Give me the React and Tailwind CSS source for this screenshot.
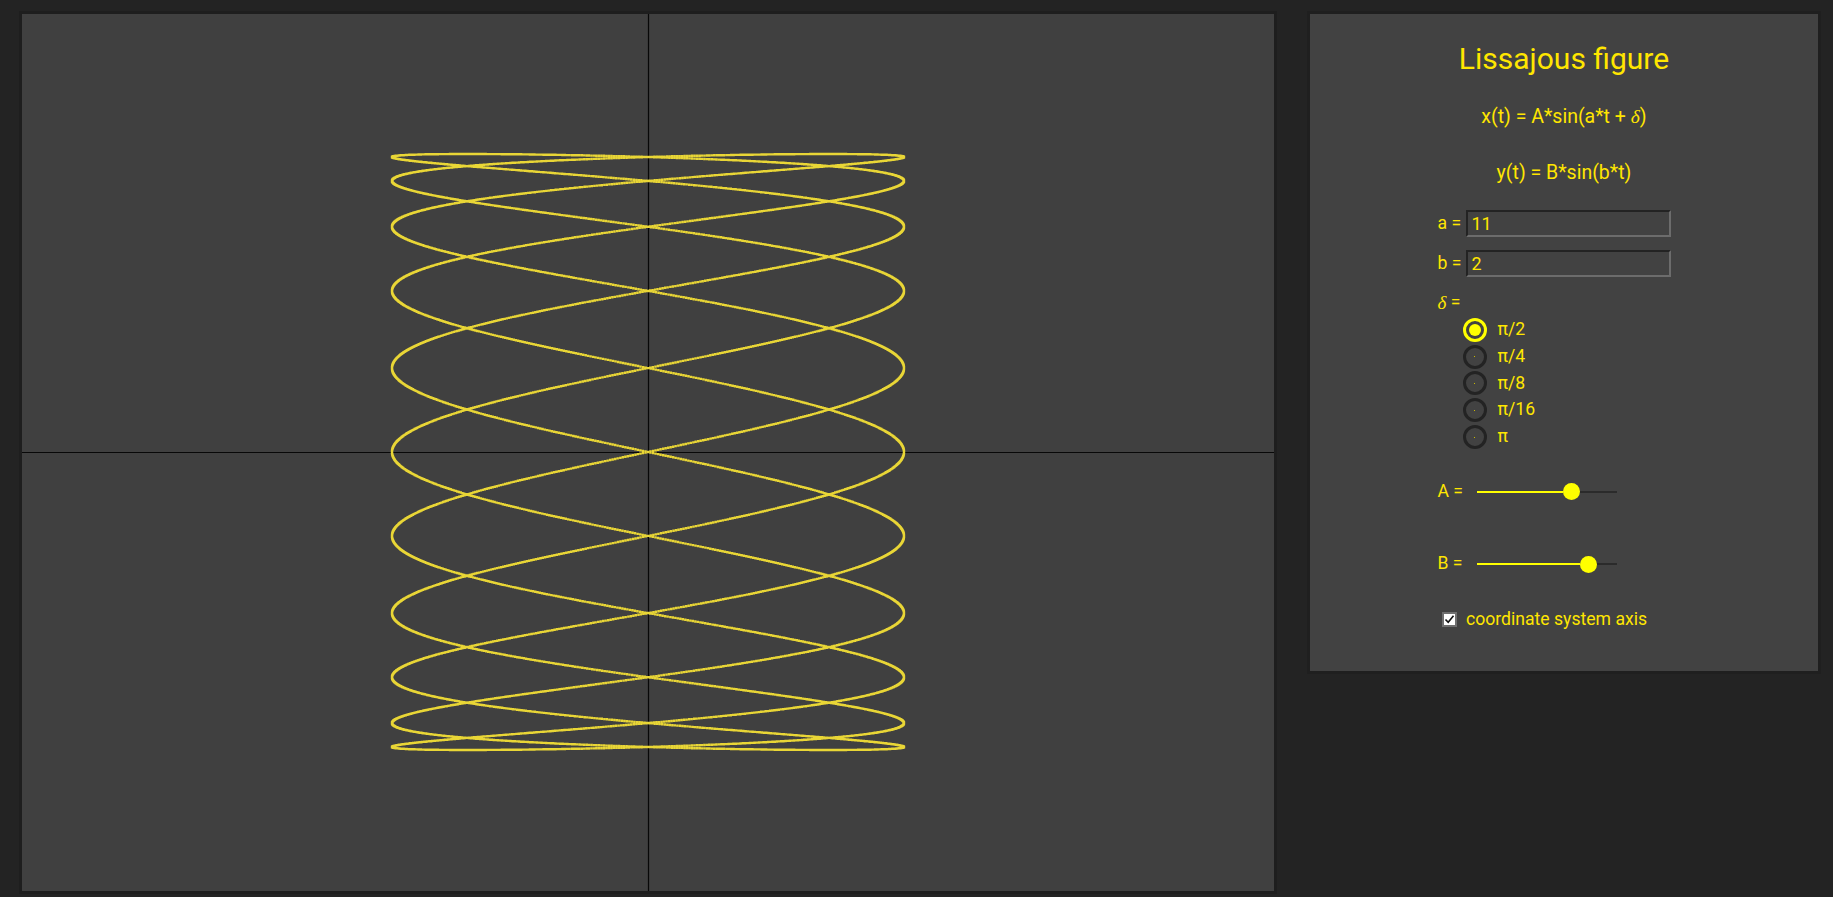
import React, { useMemo } from "react";

const W = 1252;
const H = 877;
const CX = 626;
const CY = 438;

function buildDots() {
  const N = 7000;
  const A = 256;
  const B = 298;
  let d = "";
  for (let i = 0; i <= N; i++) {
    const t = (i / N) * Math.PI * 2;
    const x = CX + A * Math.cos(11 * t);
    const y = CY - B * Math.sin(2 * t);
    d += `M${(x - 1.2).toFixed(1)} ${(y - 1.2).toFixed(1)}h2.4v2.4h-2.4z`;
  }
  return d;
}

function Radio({ checked, label }) {
  return (
    <div className="flex items-center h-[26.8px] pl-[25px]">
      {checked ? (
        <span className="w-[24px] h-[24px] rounded-full border-[3px] border-[#ffff00] flex items-center justify-center">
          <span className="w-[12px] h-[12px] rounded-full bg-[#ffff00]" />
        </span>
      ) : (
        <span className="w-[24px] h-[24px] rounded-full border-[3px] border-[#232323] flex items-center justify-center">
          <span className="w-[1px] h-[1px] bg-[#c9b800]" />
        </span>
      )}
      <span className="ml-[11px] leading-none">{label}</span>
    </div>
  );
}

function Slider({ label, fill, rest }) {
  return (
    <div className="flex items-center h-[24px]">
      <span className="w-[39.5px] leading-none">{label}</span>
      <div className="flex items-center w-[140px]">
        <span className="h-[2px] bg-[#ffff00]" style={{ width: fill }} />
        <span className="w-[17px] h-[17px] rounded-full bg-[#ffff00]" />
        <span className="h-[2px] bg-[#2b2b2b]" style={{ width: rest }} />
      </div>
    </div>
  );
}

function NumInput({ label, value }) {
  return (
    <div className="flex items-center h-[27px]">
      <span className="w-[28px] leading-none">{label}</span>
      <div className="w-[205px] h-[27px] border-2 border-t-[#232323] border-l-[#232323] border-b-[#6c6c6c] border-r-[#6c6c6c] flex items-center pl-[4px] text-[18px] leading-none">
        {value}
      </div>
    </div>
  );
}

export default function App() {
  const dots = useMemo(buildDots, []);
  return (
    <div className="w-full h-[897px] bg-[#232323] flex items-start pt-[11px] pl-[19px] gap-[30px] font-['Roboto',sans-serif] text-[#ffe600] overflow-hidden">
      <div className="w-[1258px] h-[883px] border-[3px] border-[#1e1e1e] bg-[#404040] shrink-0">
        <svg width={W} height={H} viewBox={`0 0 ${W} ${H}`} className="block">
          <line x1={CX + 0.5} y1="0" x2={CX + 0.5} y2={H} stroke="#080808" strokeWidth="1.2" />
          <line x1="0" y1={CY + 0.5} x2={W} y2={CY + 0.5} stroke="#080808" strokeWidth="1.2" />
          <path d={dots} fill="#e9d636" />
        </svg>
      </div>

      <div className="w-[514px] border-[3px] border-[#1f1f1f] bg-[#424242] shrink-0 pt-[27px] pb-[41px] text-[17.6px]">
        <div className="h-[36px] flex items-center justify-center text-[30px] leading-none">
          Lissajous figure
        </div>
        <div className="mt-[26px] h-[28px] flex items-center justify-center text-[19.5px] leading-none">
          <span>
            x(t) = A*sin(a*t +{" "}
            <span className="italic font-['Liberation_Serif',serif]">δ</span>)
          </span>
        </div>
        <div className="mt-[27.5px] h-[28px] flex items-center justify-center text-[19.5px] leading-none">
          y(t) = B*sin(b*t)
        </div>

        <div className="pl-[127.5px] flex flex-col">
          <div className="mt-[23.7px]">
            <NumInput label="a =" value="11" />
          </div>
          <div className="mt-[13px]">
            <NumInput label="b =" value="2" />
          </div>
          <div className="mt-[13.5px] h-[24px] flex items-center leading-none">
            <span className="italic font-['Liberation_Serif',serif] text-[19px]">δ</span>
            <span>&nbsp;=</span>
          </div>
          <div className="mt-[1.8px] flex flex-col">
            <Radio checked label="π/2" />
            <Radio label="π/4" />
            <Radio label="π/8" />
            <Radio label="π/16" />
            <Radio label="π" />
          </div>
          <div className="mt-[29.5px]">
            <Slider label="A =" fill={86} rest={37} />
          </div>
          <div className="mt-[48.3px]">
            <Slider label="B =" fill={103} rest={20} />
          </div>
          <div className="mt-[33.7px] h-[20px] flex items-center">
            <span className="ml-[4.5px] w-[15px] h-[15px] border-2 border-[#6f6f6f] bg-white flex items-center justify-center">
              <svg width="11" height="11" viewBox="0 0 11 11">
                <path d="M1.5 5.5 L4.2 8.3 L9.5 1.8" fill="none" stroke="#111" strokeWidth="1.6" />
              </svg>
            </span>
            <span className="ml-[9px] leading-none">coordinate system axis</span>
          </div>
        </div>
      </div>
    </div>
  );
}
